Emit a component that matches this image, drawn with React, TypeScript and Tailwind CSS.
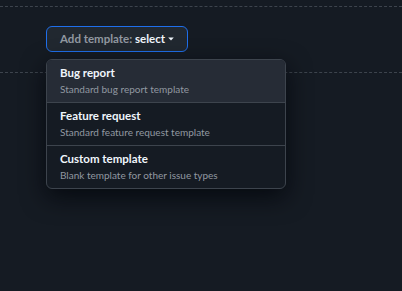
const templates = [
  { title: "Bug report", description: "Standard bug report template" },
  { title: "Feature request", description: "Standard feature request template" },
  { title: "Custom template", description: "Blank template for other issue types" },
];

function CaretDown() {
  return (
    <svg width="8" height="8" viewBox="0 0 16 16" className="fill-current" aria-hidden="true">
      <path d="M2.5 5h11L8 11z" />
    </svg>
  );
}

export default function App() {
  return (
    <div
      className="h-[291px] w-full overflow-hidden bg-[#151b23] pt-[6px] text-[#f0f6fc]"
      style={{ fontFamily: 'Lato, "Noto Sans", sans-serif' }}
    >
      <div className="relative h-[67px] border-y border-dashed border-[#3d444d] pl-[46px] pt-[19px]">
        <button
          type="button"
          className="flex h-[26px] items-center gap-[2px] rounded-md border border-[#1f6feb] bg-[#212830] pl-[13px] pr-[12px] text-[11.5px] font-bold leading-none"
        >
          <span className="whitespace-pre text-[#9198a1]">
            Add template: <span className="text-[#f0f6fc]">select</span>
          </span>
          <CaretDown />
        </button>

        <div className="absolute left-[46px] top-[52px] z-10 w-[240px] overflow-hidden rounded-md border border-[#3d444d] bg-[#151b23] shadow-[0_8px_24px_rgba(1,4,9,0.75)]">
          {templates.map((t, i) => (
            <div
              key={t.title}
              className={`px-[13px] pb-[5px] pt-[5px] ${i > 0 ? "border-t border-[#3d444d]" : ""} ${
                i === 0 ? "bg-[#262c36]" : ""
              }`}
            >
              <div className="text-[11.5px] font-bold leading-[16px] text-[#f0f6fc]">{t.title}</div>
              <div className="text-[10px] leading-[16px] text-[#9198a1]">{t.description}</div>
            </div>
          ))}
        </div>
      </div>
    </div>
  );
}
